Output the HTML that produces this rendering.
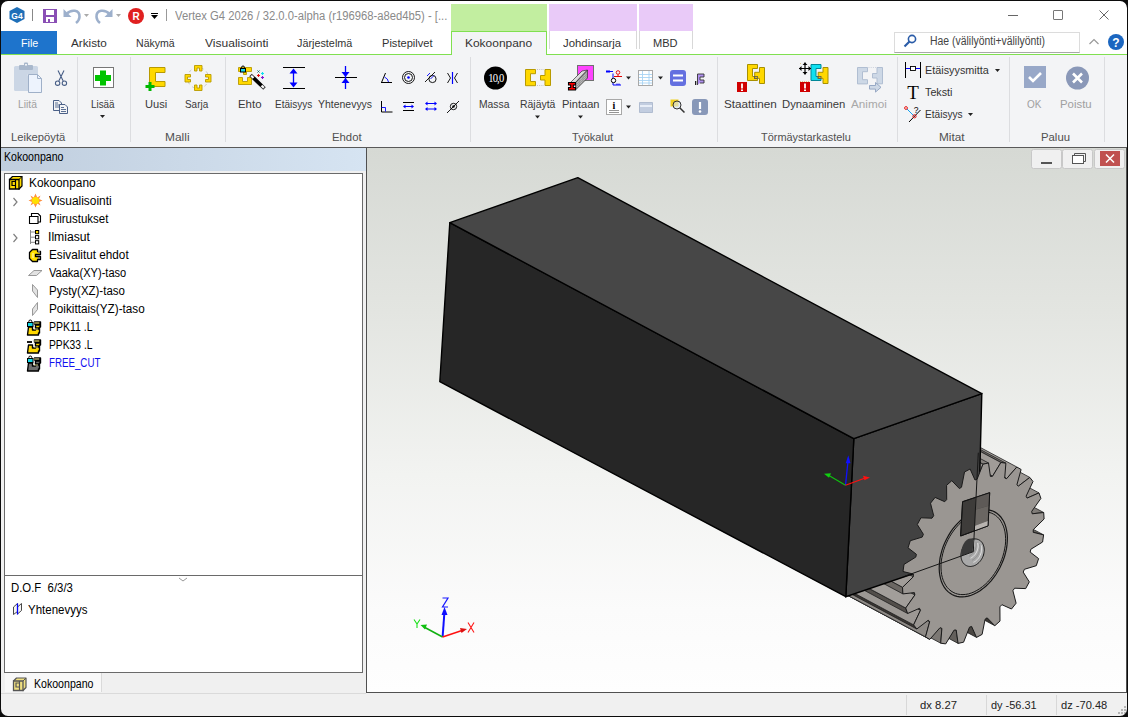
<!DOCTYPE html>
<html><head><meta charset="utf-8">
<style>
*{margin:0;padding:0;box-sizing:border-box}
html,body{width:1128px;height:717px;overflow:hidden;background:#0c0c0c}
body{font-family:"Liberation Sans",sans-serif;font-size:12px;position:relative}
#win{position:absolute;left:0;top:0;width:1128px;height:717px;border-radius:8px;overflow:hidden;background:#f0f0f0}
.a{position:absolute}
.t{position:absolute;white-space:nowrap;line-height:14px;font-size:12px}
svg{position:absolute;left:0;top:0}
#bd{position:absolute;left:-1px;top:-1px;width:1130px;height:719px;border:2px solid #0c0c0c;border-radius:9px}
</style></head><body>
<div id="win">
<div class="a" style="left:0px;top:0px;width:1128px;height:31px;background:#fff"></div>
<div class="a" style="left:32px;top:9px;width:1px;height:12px;background:#888"></div>
<div class="a" style="left:166px;top:9px;width:1px;height:12px;background:#999"></div>
<div class="a" style="left:451px;top:4px;width:96px;height:27px;background:#c2eea0"></div>
<div class="a" style="left:549px;top:4px;width:88px;height:27px;background:#e9caf8"></div>
<div class="a" style="left:639px;top:4px;width:54px;height:27px;background:#e9caf8"></div>
<div class="a" style="left:1008px;top:15px;width:10px;height:1px;background:#666"></div>
<div class="a" style="left:1053px;top:10px;width:10px;height:10px;border:1px solid #777;border-radius:1px"></div>
<div class="a" style="left:0px;top:31px;width:1128px;height:23px;background:#fff"></div>
<div class="a" style="left:0px;top:31px;width:57px;height:23px;background:#1e74cc"></div>
<div class="a" style="left:0px;top:54px;width:451px;height:1px;background:#80e050"></div>
<div class="a" style="left:547px;top:54px;width:581px;height:1px;background:#80e050"></div>
<div class="a" style="left:451px;top:31px;width:96px;height:24px;background:#f3f4f6;border:1px solid #80e050;border-bottom:none"></div>
<div class="a" style="left:549px;top:31px;width:1px;height:18px;background:#d8d8d8"></div>
<div class="a" style="left:636px;top:31px;width:1px;height:18px;background:#d8d8d8"></div>
<div class="a" style="left:639px;top:31px;width:1px;height:18px;background:#d8d8d8"></div>
<div class="a" style="left:692px;top:31px;width:1px;height:18px;background:#d8d8d8"></div>
<div class="a" style="left:894px;top:32px;width:186px;height:21px;background:#fff;border:1px solid #dcdcdc;border-bottom-color:#a8a8a8"></div>
<div class="a" style="left:0px;top:55px;width:1128px;height:92px;background:#f3f4f6"></div>
<div class="a" style="left:0px;top:147px;width:1128px;height:1px;background:#595959"></div>
<div class="a" style="left:77px;top:57px;width:1px;height:85px;background:#dcdde0"></div>
<div class="a" style="left:130px;top:57px;width:1px;height:85px;background:#dcdde0"></div>
<div class="a" style="left:225px;top:57px;width:1px;height:85px;background:#dcdde0"></div>
<div class="a" style="left:470px;top:57px;width:1px;height:85px;background:#dcdde0"></div>
<div class="a" style="left:717px;top:57px;width:1px;height:85px;background:#dcdde0"></div>
<div class="a" style="left:897px;top:57px;width:1px;height:85px;background:#dcdde0"></div>
<div class="a" style="left:1009px;top:57px;width:1px;height:85px;background:#dcdde0"></div>
<div class="a" style="left:1104px;top:57px;width:1px;height:85px;background:#dcdde0"></div>
<div class="a" style="left:0px;top:148px;width:366px;height:545px;background:#f0f0f0"></div>
<div class="a" style="left:0px;top:148px;width:366px;height:23px;background:linear-gradient(90deg,#c0cede,#d6e4f2)"></div>
<div class="a" style="left:4px;top:173px;width:359px;height:500px;background:#fff;border:1px solid #6a6a6a"></div>
<div class="a" style="left:5px;top:575px;width:357px;height:1px;background:#6a6a6a"></div>
<div class="a" style="left:5px;top:673px;width:97px;height:19px;background:#f8f8f8;border-right:1px solid #dadada"></div>
<div class="a" style="left:366px;top:148px;width:1px;height:545px;background:#505050"></div>
<div class="a" style="left:367px;top:148px;width:760px;height:544px;background:linear-gradient(180deg,#d6d9d4 0%,#e3e5e1 30%,#f2f3f1 60%,#fbfbfb 85%,#fefefe 100%)"></div>
<div class="a" style="left:367px;top:692px;width:760px;height:1px;background:#505050"></div>
<div class="a" style="left:1126px;top:148px;width:1px;height:545px;background:#505050"></div>
<div class="a" style="left:0px;top:693px;width:1128px;height:24px;background:#f0f0f0"></div>
<div class="a" style="left:0px;top:693px;width:366px;height:1px;background:#dadada"></div>
<div class="a" style="left:906px;top:695px;width:1px;height:20px;background:#d8d8d8"></div>
<div class="a" style="left:986px;top:695px;width:1px;height:20px;background:#d8d8d8"></div>
<div class="a" style="left:1056px;top:695px;width:1px;height:20px;background:#d8d8d8"></div>
<div class="a" style="left:1117.5px;top:711.5px;width:2px;height:2px;background:#b4b4b4"></div>
<div class="a" style="left:1120.5px;top:711.5px;width:2px;height:2px;background:#b4b4b4"></div>
<div class="a" style="left:1123.5px;top:711.5px;width:2px;height:2px;background:#b4b4b4"></div>
<div class="a" style="left:1120.5px;top:708.5px;width:2px;height:2px;background:#b4b4b4"></div>
<div class="a" style="left:1123.5px;top:708.5px;width:2px;height:2px;background:#b4b4b4"></div>
<div class="a" style="left:1123.5px;top:705.5px;width:2px;height:2px;background:#b4b4b4"></div>
<div class="t" style="left:175.00px;top:8.84px;color:#8a8a8a;font-size:12px;transform:scaleX(0.9384);transform-origin:0 0;">Vertex G4 2026 / 32.0.0-alpha (r196968-a8ed4b5) - [...</div>
<div class="t" style="left:20.70px;top:36.08px;color:#fff;font-size:11.3px;transform:scaleX(0.9486);transform-origin:0 0;">File</div>
<div class="t" style="left:71.00px;top:36.08px;color:#333;font-size:11.3px;transform:scaleX(1.0367);transform-origin:0 0;">Arkisto</div>
<div class="t" style="left:136.20px;top:36.08px;color:#333;font-size:11.3px;transform:scaleX(0.9348);transform-origin:0 0;">N&auml;kym&auml;</div>
<div class="t" style="left:205.00px;top:36.08px;color:#333;font-size:11.3px;transform:scaleX(1.0672);transform-origin:0 0;">Visualisointi</div>
<div class="t" style="left:297.10px;top:36.08px;color:#333;font-size:11.3px;transform:scaleX(0.9577);transform-origin:0 0;">J&auml;rjestelm&auml;</div>
<div class="t" style="left:382.40px;top:36.08px;color:#333;font-size:11.3px;transform:scaleX(0.9819);transform-origin:0 0;">Pistepilvet</div>
<div class="t" style="left:465.00px;top:36.08px;color:#333;font-size:11.3px;transform:scaleX(1.0576);transform-origin:0 0;">Kokoonpano</div>
<div class="t" style="left:562.90px;top:36.08px;color:#333;font-size:11.3px;transform:scaleX(1.0053);transform-origin:0 0;">Johdinsarja</div>
<div class="t" style="left:653.20px;top:36.08px;color:#333;font-size:11.3px;transform:scaleX(0.9781);transform-origin:0 0;">MBD</div>
<div class="t" style="left:929.50px;top:34.04px;color:#444;font-size:12px;transform:scaleX(0.8686);transform-origin:0 0;">Hae (v&auml;lily&ouml;nti+v&auml;lily&ouml;nti)</div>
<div class="t" style="left:11.00px;top:130.08px;color:#505050;font-size:11.3px;transform:scaleX(0.9935);transform-origin:0 0;">Leikep&ouml;yt&auml;</div>
<div class="t" style="left:164.90px;top:130.08px;color:#505050;font-size:11.3px;transform:scaleX(1.0567);transform-origin:0 0;">Malli</div>
<div class="t" style="left:331.50px;top:130.08px;color:#505050;font-size:11.3px;transform:scaleX(1.0038);transform-origin:0 0;">Ehdot</div>
<div class="t" style="left:572.00px;top:130.08px;color:#505050;font-size:11.3px;transform:scaleX(0.9783);transform-origin:0 0;">Ty&ouml;kalut</div>
<div class="t" style="left:761.40px;top:130.08px;color:#505050;font-size:11.3px;transform:scaleX(0.9673);transform-origin:0 0;">T&ouml;rm&auml;ystarkastelu</div>
<div class="t" style="left:939.40px;top:130.08px;color:#505050;font-size:11.3px;transform:scaleX(1.0457);transform-origin:0 0;">Mitat</div>
<div class="t" style="left:1041.30px;top:130.08px;color:#505050;font-size:11.3px;transform:scaleX(1.0031);transform-origin:0 0;">Paluu</div>
<div class="t" style="left:17.60px;top:97.08px;color:#a0a0a0;font-size:11.3px;transform:scaleX(0.9141);transform-origin:0 0;">Liit&auml;</div>
<div class="t" style="left:90.60px;top:97.08px;color:#3a3a3a;font-size:11.3px;transform:scaleX(0.8729);transform-origin:0 0;">Lis&auml;&auml;</div>
<div class="t" style="left:144.60px;top:97.08px;color:#3a3a3a;font-size:11.3px;transform:scaleX(0.9824);transform-origin:0 0;">Uusi</div>
<div class="t" style="left:185.20px;top:97.08px;color:#3a3a3a;font-size:11.3px;transform:scaleX(0.8786);transform-origin:0 0;">Sarja</div>
<div class="t" style="left:238.40px;top:97.08px;color:#3a3a3a;font-size:11.3px;transform:scaleX(1.0106);transform-origin:0 0;">Ehto</div>
<div class="t" style="left:274.70px;top:97.08px;color:#3a3a3a;font-size:11.3px;transform:scaleX(0.8866);transform-origin:0 0;">Et&auml;isyys</div>
<div class="t" style="left:318.10px;top:97.08px;color:#3a3a3a;font-size:11.3px;transform:scaleX(0.9260);transform-origin:0 0;">Yhtenevyys</div>
<div class="t" style="left:479.30px;top:97.08px;color:#3a3a3a;font-size:11.3px;transform:scaleX(0.9150);transform-origin:0 0;">Massa</div>
<div class="t" style="left:519.60px;top:97.08px;color:#3a3a3a;font-size:11.3px;transform:scaleX(0.9226);transform-origin:0 0;">R&auml;j&auml;yt&auml;</div>
<div class="t" style="left:561.80px;top:97.08px;color:#3a3a3a;font-size:11.3px;transform:scaleX(0.9781);transform-origin:0 0;">Pintaan</div>
<div class="t" style="left:724.00px;top:97.08px;color:#3a3a3a;font-size:11.3px;transform:scaleX(1.0377);transform-origin:0 0;">Staattinen</div>
<div class="t" style="left:782.20px;top:97.08px;color:#3a3a3a;font-size:11.3px;transform:scaleX(0.9994);transform-origin:0 0;">Dynaaminen</div>
<div class="t" style="left:851.00px;top:97.08px;color:#a8a8a8;font-size:11.3px;transform:scaleX(1.0376);transform-origin:0 0;">Animoi</div>
<div class="t" style="left:1027.20px;top:97.08px;color:#a0a0a0;font-size:11.3px;transform:scaleX(0.8816);transform-origin:0 0;">OK</div>
<div class="t" style="left:1060.30px;top:97.08px;color:#a0a0a0;font-size:11.3px;transform:scaleX(1.0092);transform-origin:0 0;">Poistu</div>
<div class="t" style="left:924.50px;top:63.08px;color:#333;font-size:11.3px;transform:scaleX(0.9590);transform-origin:0 0;">Et&auml;isyysmitta</div>
<div class="t" style="left:924.50px;top:85.08px;color:#333;font-size:11.3px;transform:scaleX(0.9518);transform-origin:0 0;">Teksti</div>
<div class="t" style="left:924.50px;top:106.58px;color:#333;font-size:11.3px;transform:scaleX(0.8960);transform-origin:0 0;">Et&auml;isyys</div>
<div class="t" style="left:4.30px;top:149.84px;color:#000;font-size:12px;transform:scaleX(0.8816);transform-origin:0 0;">Kokoonpano</div>
<div class="t" style="left:29.30px;top:175.64px;color:#000;font-size:12px;transform:scaleX(0.9879);transform-origin:0 0;">Kokoonpano</div>
<div class="t" style="left:48.70px;top:193.64px;color:#000;font-size:12px;transform:scaleX(0.9923);transform-origin:0 0;">Visualisointi</div>
<div class="t" style="left:48.70px;top:211.64px;color:#000;font-size:12px;transform:scaleX(0.9587);transform-origin:0 0;">Piirustukset</div>
<div class="t" style="left:47.69px;top:229.64px;color:#000;font-size:12px;transform:scaleX(1.0144);transform-origin:0 0;">Ilmiasut</div>
<div class="t" style="left:48.70px;top:247.64px;color:#000;font-size:12px;transform:scaleX(0.9787);transform-origin:0 0;">Esivalitut ehdot</div>
<div class="t" style="left:48.70px;top:265.64px;color:#000;font-size:12px;transform:scaleX(0.9211);transform-origin:0 0;">Vaaka(XY)-taso</div>
<div class="t" style="left:48.70px;top:283.64px;color:#000;font-size:12px;transform:scaleX(0.9565);transform-origin:0 0;">Pysty(XZ)-taso</div>
<div class="t" style="left:48.70px;top:301.64px;color:#000;font-size:12px;transform:scaleX(0.9761);transform-origin:0 0;">Poikittais(YZ)-taso</div>
<div class="t" style="left:48.70px;top:319.64px;color:#000;font-size:12px;transform:scaleX(0.8736);transform-origin:0 0;">PPK11 .L</div>
<div class="t" style="left:48.70px;top:337.64px;color:#000;font-size:12px;transform:scaleX(0.8584);transform-origin:0 0;">PPK33 .L</div>
<div class="t" style="left:48.70px;top:355.64px;color:#1010f0;font-size:12px;transform:scaleX(0.8108);transform-origin:0 0;">FREE_CUT</div>
<div class="t" style="left:11.40px;top:580.54px;color:#000;font-size:12px;transform:scaleX(0.9470);transform-origin:0 0;">D.O.F&nbsp; 6/3/3</div>
<div class="t" style="left:27.60px;top:602.64px;color:#000;font-size:12px;transform:scaleX(0.9576);transform-origin:0 0;">Yhtenevyys</div>
<div class="t" style="left:34.30px;top:677.04px;color:#000;font-size:12px;transform:scaleX(0.8816);transform-origin:0 0;">Kokoonpano</div>
<div class="t" style="left:920.30px;top:698.08px;color:#222;font-size:11.3px;transform:scaleX(0.9980);transform-origin:0 0;">dx 8.27</div>
<div class="t" style="left:991.00px;top:698.08px;color:#222;font-size:11.3px;transform:scaleX(0.9676);transform-origin:0 0;">dy -56.31</div>
<div class="t" style="left:1061.00px;top:698.08px;color:#222;font-size:11.3px;transform:scaleX(0.9825);transform-origin:0 0;">dz -70.48</div>
<svg width="1128" height="717" viewBox="0 0 1128 717">
<polygon points="17,7 24.5,11 24.5,19 17,23 9.5,19 9.5,11" fill="#1e6fb8"/>
<text x="17" y="18.5" font-size="8.5" font-weight="bold" fill="#fff" text-anchor="middle" font-family="Liberation Sans">G4</text>
<rect x="43.5" y="9.5" width="13" height="13" fill="#8a4fb5" stroke="#8a4fb5"/>
<rect x="46" y="10" width="8" height="5" fill="#fff"/>
<rect x="46" y="17" width="8" height="5" fill="#fff"/><rect x="48" y="19" width="2" height="3" fill="#8a4fb5"/>
<path d="M63.5,9 L63.5,17 L71.5,17 Z" fill="#9db0cc"/><path d="M66.5,14 C71,9 80,9.5 79.5,17 C79.3,19.5 78,21.5 76,23" fill="none" stroke="#9db0cc" stroke-width="2.6"/>
<path d="M84,14 L89,14 L86.5,17 Z" fill="#aaa"/>
<path d="M112.5,9 L112.5,17 L104.5,17 Z" fill="#9db0cc"/><path d="M109.5,14 C105,9 96,9.5 96.5,17 C96.7,19.5 98,21.5 100,23" fill="none" stroke="#9db0cc" stroke-width="2.6"/>
<path d="M116,14 L121,14 L118.5,17 Z" fill="#aaa"/>
<circle cx="136" cy="16" r="8" fill="#e02020"/>
<text x="136" y="20" font-size="10" font-weight="bold" fill="#fff" text-anchor="middle" font-family="Liberation Sans">R</text>
<rect x="151" y="13" width="7" height="1" fill="#000"/><path d="M151,15 L158,15 L154.5,19 Z" fill="#000"/>
<path d="M1099.5,10.5 L1108.5,19.5 M1108.5,10.5 L1099.5,19.5" stroke="#666" stroke-width="1"/>
<circle cx="912" cy="39" r="3.6" fill="none" stroke="#2a5ca8" stroke-width="1.6"/><path d="M909.5,41.5 L904.5,46.5" stroke="#2a5ca8" stroke-width="2.2"/>
<path d="M1089.5,44 L1094,39.5 L1098.5,44" fill="none" stroke="#999" stroke-width="1.2"/>
<circle cx="1116" cy="42" r="8" fill="#1b66c0"/>
<text x="1116" y="46.5" font-size="12" font-weight="bold" fill="#fff" text-anchor="middle" font-family="Liberation Sans">?</text>
<path d="M100.0,115 L105.0,115 L102.5,118 Z" fill="#222"/>
<path d="M535.0,115.5 L540.0,115.5 L537.5,118.5 Z" fill="#222"/>
<path d="M578.0,115.5 L583.0,115.5 L580.5,118.5 Z" fill="#222"/>
<path d="M995.0,69 L1000.0,69 L997.5,72 Z" fill="#222"/>
<path d="M968.0,113 L973.0,113 L970.5,116 Z" fill="#222"/>
<path d="M179,578 L183,581 L187,578" fill="none" stroke="#999" stroke-width="1"/>
<rect x="14" y="66" width="24" height="25" rx="1.5" fill="#cbd6e5"/>
<rect x="19" y="65" width="14" height="5" rx="1" fill="#a9b8cc"/><rect x="24" y="62.5" width="4" height="4" rx="1" fill="#a9b8cc"/><rect x="25.2" y="64" width="1.6" height="1.6" fill="#fff"/>
<rect x="27.5" y="74.5" width="11" height="1" fill="#f3f4f6"/>
<path d="M28.5,74.5 L37.5,74.5 L41.5,78.5 L41.5,92.5 L28.5,92.5 Z" fill="#edf3fd" stroke="#9fb0c8" stroke-width="1"/><path d="M37.5,74.5 L37.5,78.5 L41.5,78.5" fill="none" stroke="#9fb0c8"/>
<path d="M58,70.5 L63.2,81 M64,70.5 L58.8,81" stroke="#4a6088" stroke-width="1.1" fill="none"/><circle cx="57.6" cy="83.2" r="2.2" fill="none" stroke="#4a6088" stroke-width="1.1"/><circle cx="64.4" cy="83.2" r="2.2" fill="none" stroke="#4a6088" stroke-width="1.1"/>
<path d="M53.5,100.5 L59,100.5 L61.5,103 L61.5,110.5 L53.5,110.5 Z" fill="#f3f4f6" stroke="#4a6088"/><path d="M55,103 h3 M55,105 h5 M55,107 h4" stroke="#4a6088" stroke-width="0.9"/>
<path d="M59.5,104.5 L65,104.5 L67.5,107 L67.5,113.5 L59.5,113.5 Z" fill="#f3f4f6" stroke="#4a6088"/><path d="M61,107.5 h3 M61,109.5 h5 M61,111.5 h5" stroke="#4a6088" stroke-width="0.9"/>
<rect x="93.5" y="67.5" width="20" height="20" fill="#fff" stroke="#777"/>
<path d="M100,70.5 h6 v4.5 h5 v6 h-5 v4.5 h-6 v-4.5 h-5 v-6 h5 Z" fill="#00c400"/>
<path d="M149.5,67.5 h15.5 v5 h-9.5 v9 h9.5 v5 h-15.5 Z" fill="#ffd800" stroke="#b89a00"/>
<path d="M148.5,82 h3 v3 h3 v3 h-3 v3 h-3 v-3 h-3 v-3 h3 Z" fill="#00b800"/>
<circle cx="198" cy="78" r="10.5" fill="none" stroke="#c0c0c0" stroke-width="0.9" stroke-dasharray="3,3.5"/>
<path d="M194.5,71 v-5.5 h7.5 v5.5 h-2.5 v-3 h-2.5 v3 Z" fill="#ffd800" stroke="#b89a00" stroke-width="0.9"/>
<path d="M194.5,85 v5.5 h7.5 v-5.5 h-2.5 v3 h-2.5 v-3 Z" fill="#ffd800" stroke="#b89a00" stroke-width="0.9"/>
<path d="M190.5,74.5 h-5.5 v7.5 h5.5 v-2.5 h-3 v-2.5 h3 Z" fill="#ffd800" stroke="#b89a00" stroke-width="0.9"/>
<path d="M205.5,74.5 h5.5 v7.5 h-5.5 v-2.5 h3 v-2.5 h-3 Z" fill="#ffd800" stroke="#b89a00" stroke-width="0.9"/>
<path d="M238.5,67.5 h13 v4 h-13 Z M243.5,71.5 h3 v3 h-3 Z" fill="#ffd800" stroke="#b89a00" stroke-width="0.9"/>
<path d="M238.5,77.5 h4 v4 h5 v-4 h4 v7 h-13 Z" fill="#ffd800" stroke="#b89a00" stroke-width="0.9"/>
<rect x="240.5" y="68.5" width="5" height="3.5" fill="#18d8e8" stroke="#000" stroke-width="1"/><path d="M241.5,68.5 v-1 a1.5,1.5 0 0 1 3,0 v1" fill="none" stroke="#000" stroke-width="1"/>
<path d="M250.5,75 L264.5,88.5" stroke="#333" stroke-width="3.6"/><path d="M251.2,75.7 L263.8,87.8" stroke="#fff" stroke-width="2"/><path d="M253.5,78 L261.5,85.7" stroke="#000" stroke-width="3.2"/>
<path d="M257.5,70.5 l2,2 m0,-2 l-2,2" stroke="#107070" stroke-width="1"/><path d="M261,73.5 h3 m-1.5,-1.5 v3" stroke="#10e0f0" stroke-width="1.1"/><path d="M257,75.5 h3 m-1.5,-1.5 v3" stroke="#e01010" stroke-width="1.1"/><path d="M261,77.5 h3 m-1.5,-1.5 v3" stroke="#8010d0" stroke-width="1.1"/>
<path d="M283,67.5 h22 M283,88.5 h22" stroke="#000" stroke-width="1"/>
<path d="M293.5,71 v14" stroke="#0000ff" stroke-width="1.3"/><path d="M289.5,73.5 L293.5,68.5 L297.5,73.5 Z M289.5,82.5 L293.5,87.5 L297.5,82.5 Z" fill="#0000ff"/>
<path d="M335,77.5 h22" stroke="#000" stroke-width="1"/>
<path d="M345.5,66 v23" stroke="#0000ff" stroke-width="1.3"/><path d="M341.5,72 L345.5,77 L349.5,72 Z M341.5,83 L345.5,78 L349.5,83 Z" fill="#0000ff"/>
<path d="M381,82.5 h11 M381.5,82.5 L385.5,73" stroke="#000" stroke-width="1" fill="none"/><path d="M384.5,77 Q388,78.5 388.5,82" stroke="#0000ff" stroke-width="0.9" fill="none"/>
<circle cx="408.5" cy="77.5" r="6" fill="none" stroke="#000" stroke-width="0.9"/><circle cx="408.5" cy="77.5" r="4" fill="none" stroke="#000" stroke-width="0.9"/><circle cx="408.5" cy="77.5" r="1.3" fill="#0000ff"/>
<path d="M425,82 L435,72" stroke="#000" stroke-width="0.9"/><circle cx="432.5" cy="79" r="3.6" fill="none" stroke="#000" stroke-width="0.9"/><path d="M427,76 L430,73 M430.5,79 L434,75.5" stroke="#0000ff" stroke-width="0.9"/>
<path d="M452.5,72 v12" stroke="#0000ff" stroke-width="1.2"/><path d="M447.5,73 L450.5,78 L447.5,83 M457.5,73 L454.5,78 L457.5,83" stroke="#000" stroke-width="0.9" fill="none"/>
<path d="M381.5,101 v11 h11" stroke="#000" stroke-width="1" fill="none"/><path d="M381.5,107.5 h4 v4" stroke="#0000ff" stroke-width="0.9" fill="none"/>
<path d="M403,102.5 h11 M403,110.5 h11" stroke="#000" stroke-width="1"/><path d="M404.5,106.5 h8" stroke="#0000ff" stroke-width="1"/><path d="M403,106.5 l2.5,-2 v4 Z M414,106.5 l-2.5,-2 v4 Z" fill="#0000ff"/>
<path d="M426.5,103.5 h9 M426.5,109 h9" stroke="#0000ff" stroke-width="1"/><path d="M425,103.5 l2.5,-2 v4 Z M437,103.5 l-2.5,-2 v4 Z M425,109 l2.5,-2 v4 Z M437,109 l-2.5,-2 v4 Z" fill="#0000ff"/>
<path d="M447,113 L459,101" stroke="#000" stroke-width="0.9"/><circle cx="453.5" cy="106.5" r="3.2" fill="none" stroke="#000" stroke-width="0.9"/><circle cx="453.5" cy="106.5" r="1.2" fill="#000"/>
<circle cx="495.5" cy="78" r="11.5" fill="#000"/>
<text x="495.8" y="82.3" font-size="11.5" fill="#fff" text-anchor="middle" font-family="Liberation Serif" letter-spacing="-0.9" transform="translate(495.8,0) scale(0.92,1) translate(-495.8,0)">10,0</text>
<path d="M525.5,69.5 h10 v4.2 h-5 v7.8 h5 v4.2 h-10 Z" fill="#ffd800" stroke="#b89a00"/>
<path d="M550.5,69.5 h-5.5 v6 h-4.5 v4.5 h4.5 v5.5 h5.5 Z" fill="#ffd800" stroke="#b89a00"/>
<path d="M537,69.5 h7 M537,85.5 h7" stroke="#b8b8b8" stroke-width="0.8" stroke-dasharray="1,1.2"/>
<rect x="577.5" y="65.5" width="16" height="15" fill="#ff44ff" stroke="#707070"/>
<path d="M569,84 L582,71 L587.5,70 L575,83 Z" fill="#dcdcdc" stroke="#333" stroke-width="0.7"/>
<path d="M575,83 L587.5,70 L587.5,78 L576,89.5 Z" fill="#9a9a9a" stroke="#333" stroke-width="0.7"/>
<path d="M577,87 L587,77 M577,85 L587,75 M577,83 L587,73" stroke="#e8e8e8" stroke-width="0.6" stroke-dasharray="1,1"/>
<path d="M568.5,82.5 h7 v2.5 h-2.2 v2.5 h2.2 v2.5 h-7 v-2.5 h2.2 v-2.5 h-2.2 Z" fill="#ff0000" stroke="#000" stroke-width="1.1"/>
<path d="M613,73.5 v11.5 h8" stroke="#0000ff" stroke-width="1" fill="none"/><path d="M606,71.5 h7 M607,70 v3 M609,70 v3 M617,85 v-1.5 M619,85 v-1.5" stroke="#0000ff" stroke-width="1" fill="none"/>
<path d="M614,76.5 h8 M618,76.5 v-2" stroke="#e00000" stroke-width="1"/><circle cx="618" cy="72.5" r="1.8" fill="none" stroke="#e00000" stroke-width="0.9"/>
<circle cx="613.5" cy="80.5" r="2.2" fill="#fff" stroke="#000" stroke-width="1"/>
<path d="M626.0,76.5 L631.0,76.5 L628.5,79.5 Z" fill="#222"/>
<rect x="638.5" y="70.5" width="14" height="15" fill="#fff" stroke="#a8a8a8"/><path d="M639,74.5 h13 M639,77.5 h13 M639,80.5 h13 M639,83 h13 M642.5,71 v14 M649,71 v14" stroke="#a8d4f4" stroke-width="0.9"/>
<path d="M658.0,76.5 L663.0,76.5 L660.5,79.5 Z" fill="#222"/>
<rect x="670" y="70" width="16" height="16" rx="3" fill="#6470e0"/><path d="M673,75.5 h10 M673,80.5 h10" stroke="#fff" stroke-width="1.8"/>
<path d="M697.5,85 v-11 h6.5 v3 h-4 v3 h4 v3 h-4" fill="#b090f0" stroke="#333" stroke-width="0.9"/><rect x="695" y="81" width="1.3" height="4" fill="#222"/>
<rect x="606.5" y="99.5" width="15" height="15" fill="#fff" stroke="#a8a8a8"/><text x="614" y="108.5" font-size="10" font-weight="bold" fill="#000" text-anchor="middle" font-family="Liberation Serif">i</text><path d="M609,110.5 h10 M609,112.5 h10" stroke="#666" stroke-width="0.7"/>
<path d="M626.0,105.5 L631.0,105.5 L628.5,108.5 Z" fill="#222"/>
<path d="M639.5,102.5 h13 v10 h-13 Z" fill="#c2cde0" stroke="#b0bcd0"/><path d="M640,106 h12" stroke="#e8eef8" stroke-width="2"/>
<rect x="670.5" y="99.5" width="8" height="7" fill="#f0d020"/><circle cx="677" cy="105" r="4" fill="#d8e8f8" fill-opacity="0.6" stroke="#333" stroke-width="1"/><path d="M680,108 L684.5,112.5" stroke="#333" stroke-width="1.5"/>
<rect x="692" y="99" width="16" height="16" rx="3" fill="#8898b8"/><path d="M700,102 v7" stroke="#fff" stroke-width="2.2"/><circle cx="700" cy="111.5" r="1.3" fill="#fff"/>
<path d="M747.5,64.5 h10 v4 h-5 v8 h5 v4 h-10 Z" fill="#ffd800" stroke="#a89000" stroke-width="1"/>
<path d="M764.5,67.5 v16 h-5 v-5.2 h-4.8 v-6 h4.8 v-4.8 Z" fill="#ffd800" stroke="#a89000" stroke-width="1"/>
<rect x="754.5" y="76.5" width="3" height="2" fill="none" stroke="#555" stroke-width="0.8"/>
<rect x="737" y="82" width="10" height="10" fill="#d00000"/><path d="M742,83.5 v5" stroke="#fff" stroke-width="1.8"/><rect x="741" y="89.5" width="2" height="1.5" fill="#fff"/>
<path d="M811.0,64.5 h10 v4 h-5 v8 h5 v4 h-10 Z" fill="#10e0f0" stroke="#008898" stroke-width="1"/>
<path d="M828.0,67.5 v16 h-5 v-5.2 h-4.8 v-6 h4.8 v-4.8 Z" fill="#ffd800" stroke="#a89000" stroke-width="1"/>
<rect x="818.0" y="76.5" width="3" height="2" fill="none" stroke="#555" stroke-width="0.8"/>
<path d="M799,68.5 h12 M805,62.5 v12" stroke="#000" stroke-width="1.2"/><path d="M799,68.5 l2.5,-2.5 v5 Z M811,68.5 l-2.5,-2.5 v5 Z M805,62.5 l-2.5,2.5 h5 Z M805,74.5 l-2.5,-2.5 h5 Z" fill="#000"/>
<path d="M800,63.5 h2 M800,81.5 h9" stroke="#d8b860" stroke-width="0.7" stroke-dasharray="1,1"/>
<rect x="800" y="82" width="10" height="10" fill="#d00000"/><path d="M805,83.5 v5" stroke="#fff" stroke-width="1.8"/><rect x="804" y="89.5" width="2" height="1.5" fill="#fff"/>
<path d="M857.5,67.5 h10 v4.2 h-5 v8 h5 v4.2 h-10 Z" fill="#cdd8e6" stroke="#b0bed2"/>
<path d="M882.5,67.5 h-5.5 v6 h-4.5 v4.5 h4.5 v5.8 h5.5 Z" fill="#cdd8e6" stroke="#b0bed2"/>
<path d="M868.5,67.5 h8" stroke="#c0c8d4" stroke-width="0.8" stroke-dasharray="1,1.2"/>
<path d="M869.5,85.5 h6 v-3 l5.5,4.8 l-5.5,4.8 v-3 h-6 Z" fill="#cdd8e6" stroke="#8fa2c0" stroke-width="0.9"/>
<path d="M905.5,62 v16 M920.5,62 v16" stroke="#000" stroke-width="1"/><path d="M906,68.5 h14" stroke="#0000ff" stroke-width="1"/><rect x="910.5" y="66.5" width="5" height="4" fill="#fff" stroke="#000" stroke-width="0.9"/>
<text x="913" y="98.5" font-size="19" fill="#000" text-anchor="middle" font-family="Liberation Serif">T</text>
<path d="M909,122 L920.5,110" stroke="#000" stroke-width="1"/><path d="M906.5,108.5 L913.8,115.8" stroke="#10a0f0" stroke-width="1"/><circle cx="906" cy="108" r="1.4" fill="#fff" stroke="#e00000" stroke-width="0.9"/><circle cx="914.5" cy="116.3" r="1.6" fill="none" stroke="#e00000" stroke-width="0.9"/>
<text x="916" y="112.5" font-size="8.5" fill="#000" text-anchor="middle" font-family="Liberation Sans">?</text>
<rect x="1024" y="66" width="22" height="22" fill="#98a8c8"/><path d="M1029,77 l4,4 l8,-8" stroke="#fff" stroke-width="2.6" fill="none"/>
<circle cx="1077.5" cy="78" r="11.5" fill="#8a98b8"/><path d="M1073,73.5 l9,9 m0,-9 l-9,9" stroke="#fff" stroke-width="2.6"/>
<path d="M9.5,179.5 L12.5,176.5 L22,176.5 L22,186 L19,189 Z" fill="#ffdc00" stroke="#000" stroke-width="1.2" stroke-linejoin="round"/>
<path d="M9.5,179.5 h9.5 v9.5 h-9.5 Z" fill="#ffdc00" stroke="#000" stroke-width="1.3"/><path d="M19,179.5 L22,176.5" stroke="#000" stroke-width="1"/>
<path d="M15.5,181.5 h-3.5 v4 h3.5 M15.5,179.5 v9.5" stroke="#000" stroke-width="1.2" fill="none"/>
<path d="M13.5,198 L17,202 L13.5,206" fill="none" stroke="#808080" stroke-width="1.2"/>
<path d="M13.5,234 L17,238 L13.5,242" fill="none" stroke="#808080" stroke-width="1.2"/>
<g transform="translate(35.5,200.5)"><path d="M0,-7 L1.8,-3 L5,-5 L3.5,-1.5 L7,0 L3.5,1.5 L5,5 L1.8,3 L0,7 L-1.8,3 L-5,5 L-3.5,1.5 L-7,0 L-3.5,-1.5 L-5,-5 L-1.8,-3 Z" fill="#ff9040"/><circle r="3.6" fill="#ffe000"/></g>
<path d="M31.5,213.5 h6.5 l2.5,2.5 v6 h-9 Z" fill="#fff" stroke="#000" stroke-width="1.1"/>
<path d="M29.5,216.5 h8.5 v7 h-8.5 Z" fill="#fff" stroke="#000" stroke-width="1.1"/>
<path d="M30.5,230 v14 M30.5,232 h4.5 M30.5,237.2 h4.5 M30.5,242.3 h4.5" stroke="#8a8a8a" stroke-width="1" fill="none"/>
<rect x="35.5" y="230.5" width="3.2" height="3.2" fill="#ffd800" stroke="#000" stroke-width="1"/><rect x="35.5" y="235.6" width="3.2" height="3.2" fill="#fff" stroke="#000" stroke-width="1"/><rect x="35.5" y="240.7" width="3.2" height="3.2" fill="#fff" stroke="#000" stroke-width="1"/>
<path d="M32.5,249.5 h5 v2 h3 v3 h-5 v2 h5 v3 h-3 v2 h-5 l-3,-3 v-6 Z" fill="#ffe000" stroke="#000" stroke-width="1.3" stroke-linejoin="round"/>
<rect x="38" y="251" width="2" height="2" fill="#777"/><rect x="38" y="257" width="2" height="2" fill="#777"/><path d="M33,253 v5" stroke="#fff" stroke-width="0.8"/>
<path d="M28.5,275.5 L34,270.5 L42,270.5 L36.5,275.5 Z" fill="#e2e2e2" stroke="#8e8e8e" stroke-width="0.9"/>
<path d="M32.5,284.5 L37.5,290 L37.5,297.5 L32.5,291 Z" fill="#e2e2e2" stroke="#8e8e8e" stroke-width="0.9"/>
<path d="M32.5,309 L37.5,302.5 L37.5,309.5 L32.5,315.5 Z" fill="#e2e2e2" stroke="#8e8e8e" stroke-width="0.9"/>
<path d="M28.5,327.0 h4 v3 h3 v-1 h3 v-1 h-3 v-3 h4 v-1 h-5 v-2 h6 v5 h-1 v6 h-1 v2 h-11 Z" fill="#ffd800" stroke="#000" stroke-width="1.4" stroke-linejoin="round"/>
<path d="M34,323.0 h5 M34,329.0 h4" stroke="#fff8a0" stroke-width="0.8"/>
<rect x="27.5" y="322.5" width="5.5" height="4" fill="#10d8e8" stroke="#000" stroke-width="1"/><path d="M28.8,322.5 v-1 a1.5,1.5 0 0 1 3,0 v1" fill="none" stroke="#000" stroke-width="1"/>
<path d="M28.5,345.0 h4 v3 h3 v-1 h3 v-1 h-3 v-3 h4 v-1 h-5 v-2 h6 v5 h-1 v6 h-1 v2 h-11 Z" fill="#ffd800" stroke="#000" stroke-width="1.4" stroke-linejoin="round"/>
<path d="M34,341.0 h5 M34,347.0 h4" stroke="#fff8a0" stroke-width="0.8"/>
<path d="M27,342.0 h5" stroke="#000" stroke-width="1.8"/>
<path d="M28.5,363.0 h4 v3 h3 v-1 h3 v-1 h-3 v-3 h4 v-1 h-5 v-2 h6 v5 h-1 v6 h-1 v2 h-11 Z" fill="#6e6e6e" stroke="#000" stroke-width="1.4" stroke-linejoin="round"/>
<path d="M34,359.0 h5 M34,365.0 h4" stroke="#fff8a0" stroke-width="0.8"/>
<rect x="27.5" y="358.5" width="5.5" height="4" fill="#10d8e8" stroke="#000" stroke-width="1"/><path d="M28.8,358.5 v-1 a1.5,1.5 0 0 1 3,0 v1" fill="none" stroke="#000" stroke-width="1"/>
<path d="M13.5,607 L17.5,603.5 L17.5,611.5 L13.5,614.5 Z" fill="#f4f4f4" stroke="#333" stroke-width="0.9"/>
<path d="M17.5,607 L21.5,603.5 L21.5,610.5 L17.5,614 Z" fill="#f4f4f4" stroke="#333" stroke-width="0.9"/>
<path d="M17.5,603.5 L17.5,614.5" stroke="#0000ff" stroke-width="1.3"/>
<path d="M13.5,681.0 L16.5,678.0 L26,678.0 L26,687.5 L23,690.5 Z" fill="#f0e080" stroke="#555" stroke-width="1.2" stroke-linejoin="round"/>
<path d="M13.5,681.0 h9.5 v9.5 h-9.5 Z" fill="#f0e080" stroke="#555" stroke-width="1.3"/><path d="M23,681.0 L26,678.0" stroke="#555" stroke-width="1"/>
<path d="M19.5,683.0 h-3.5 v4 h3.5 M19.5,681.0 v9.5" stroke="#555" stroke-width="1.2" fill="none"/>
<g transform="translate(0.8,0.7)">
<polygon points="1032.4,531.6 1042.8,534.2 820.6,415.4 810.2,412.8" fill="#696561" stroke="#1e1e1e" stroke-width="0.8" stroke-linejoin="round"/>
<polygon points="994.0,625.0 986.4,617.1 764.2,498.3 771.8,506.2" fill="#3a3632" stroke="#1e1e1e" stroke-width="0.8" stroke-linejoin="round"/>
<polygon points="1031.4,513.1 1042.9,511.8 820.7,393.0 809.2,394.3" fill="#807c78" stroke="#1e1e1e" stroke-width="0.8" stroke-linejoin="round"/>
<polygon points="975.7,636.7 970.8,625.7 748.6,506.9 753.5,517.9" fill="#4a4642" stroke="#1e1e1e" stroke-width="0.8" stroke-linejoin="round"/>
<polygon points="1026.3,497.4 1038.2,492.2 816.0,373.4 804.1,378.6" fill="#928e8a" stroke="#1e1e1e" stroke-width="0.8" stroke-linejoin="round"/>
<polygon points="957.3,642.7 955.4,629.3 733.2,510.5 735.1,523.9" fill="#64605c" stroke="#1e1e1e" stroke-width="0.8" stroke-linejoin="round"/>
<polygon points="1017.6,485.4 1029.0,476.7 806.8,357.9 795.4,366.6" fill="#9d9995" stroke="#1e1e1e" stroke-width="0.8" stroke-linejoin="round"/>
<polygon points="939.9,642.5 941.1,627.7 718.9,508.9 717.7,523.7" fill="#7c7874" stroke="#1e1e1e" stroke-width="0.8" stroke-linejoin="round"/>
<polygon points="929.0,638.7 924.7,636.2 702.5,517.4 706.8,519.9" fill="#3a3632" stroke="#1e1e1e" stroke-width="0.8" stroke-linejoin="round"/>
<polygon points="1005.8,478.0 1016.0,466.3 793.8,347.5 783.6,359.2" fill="#a29e9a" stroke="#1e1e1e" stroke-width="0.8" stroke-linejoin="round"/>
<polygon points="1003.9,477.3 1005.8,478.0 783.6,359.2 781.7,358.5" fill="#64605c" stroke="#1e1e1e" stroke-width="0.8" stroke-linejoin="round"/>
<polygon points="924.7,636.2 928.9,620.9 706.7,502.1 702.5,517.4" fill="#8e8a86" stroke="#1e1e1e" stroke-width="0.8" stroke-linejoin="round"/>
<polygon points="928.9,620.9 927.4,619.6 705.2,500.8 706.7,502.1" fill="#3a3632" stroke="#1e1e1e" stroke-width="0.8" stroke-linejoin="round"/>
<polygon points="1000.1,461.8 1005.1,462.5 782.9,343.7 777.9,343.0" fill="#706c68" stroke="#1e1e1e" stroke-width="0.8" stroke-linejoin="round"/>
<polygon points="991.7,475.6 1000.1,461.8 777.9,343.0 769.5,356.8" fill="#a09c98" stroke="#1e1e1e" stroke-width="0.8" stroke-linejoin="round"/>
<polygon points="916.0,628.3 912.8,624.2 690.6,505.4 693.8,509.5" fill="#3a3632" stroke="#1e1e1e" stroke-width="0.8" stroke-linejoin="round"/>
<polygon points="989.6,475.7 991.7,475.6 769.5,356.8 767.4,356.9" fill="#7c7874" stroke="#1e1e1e" stroke-width="0.8" stroke-linejoin="round"/>
<polygon points="912.8,624.2 919.7,609.5 697.5,490.7 690.6,505.4" fill="#9c9894" stroke="#1e1e1e" stroke-width="0.8" stroke-linejoin="round"/>
<polygon points="919.7,609.5 918.7,607.6 696.5,488.8 697.5,490.7" fill="#44403c" stroke="#1e1e1e" stroke-width="0.8" stroke-linejoin="round"/>
<polygon points="982.2,463.5 987.7,462.3 765.5,343.5 760.0,344.7" fill="#86827e" stroke="#1e1e1e" stroke-width="0.8" stroke-linejoin="round"/>
<polygon points="974.2,479.3 976.3,478.5 754.1,359.7 752.0,360.5" fill="#8f8b87" stroke="#1e1e1e" stroke-width="0.8" stroke-linejoin="round"/>
<polygon points="976.3,478.5 982.2,463.5 760.0,344.7 754.1,359.7" fill="#97938f" stroke="#1e1e1e" stroke-width="0.8" stroke-linejoin="round"/>
<polygon points="906.8,612.8 904.9,607.3 682.7,488.5 684.6,494.0" fill="#524e4a" stroke="#1e1e1e" stroke-width="0.8" stroke-linejoin="round"/>
<polygon points="914.1,594.3 913.6,591.9 691.4,473.1 691.9,475.5" fill="#5f5b57" stroke="#1e1e1e" stroke-width="0.8" stroke-linejoin="round"/>
<polygon points="904.9,607.3 914.1,594.3 691.9,475.5 682.7,488.5" fill="#a29e9a" stroke="#1e1e1e" stroke-width="0.8" stroke-linejoin="round"/>
<polygon points="958.6,487.9 960.7,486.5 738.5,367.7 736.4,369.1" fill="#9c9894" stroke="#1e1e1e" stroke-width="0.8" stroke-linejoin="round"/>
<polygon points="960.7,486.5 963.7,471.3 741.5,352.5 738.5,367.7" fill="#87837f" stroke="#1e1e1e" stroke-width="0.8" stroke-linejoin="round"/>
<polygon points="912.5,576.1 912.6,573.4 690.4,454.6 690.3,457.3" fill="#77736f" stroke="#1e1e1e" stroke-width="0.8" stroke-linejoin="round"/>
<polygon points="963.7,471.3 969.3,468.3 747.1,349.5 741.5,352.5" fill="#96928e" stroke="#1e1e1e" stroke-width="0.8" stroke-linejoin="round"/>
<polygon points="901.7,586.7 912.5,576.1 690.3,457.3 679.5,467.9" fill="#a19d99" stroke="#1e1e1e" stroke-width="0.8" stroke-linejoin="round"/>
<polygon points="902.1,593.2 901.7,586.7 679.5,467.9 679.9,474.4" fill="#6b6763" stroke="#1e1e1e" stroke-width="0.8" stroke-linejoin="round"/>
<polygon points="943.9,501.0 945.9,498.9 723.7,380.1 721.7,382.2" fill="#a29e9a" stroke="#1e1e1e" stroke-width="0.8" stroke-linejoin="round"/>
<polygon points="915.0,556.4 915.6,553.6 693.4,434.8 692.8,437.6" fill="#8b8783" stroke="#1e1e1e" stroke-width="0.8" stroke-linejoin="round"/>
<polygon points="945.9,498.9 945.8,484.6 723.6,365.8 723.7,380.1" fill="#726e6a" stroke="#1e1e1e" stroke-width="0.8" stroke-linejoin="round"/>
<polygon points="931.2,517.5 932.9,515.0 710.7,396.2 709.0,398.7" fill="#a19d99" stroke="#1e1e1e" stroke-width="0.8" stroke-linejoin="round"/>
<polygon points="903.2,563.7 915.0,556.4 692.8,437.6 681.0,444.9" fill="#999591" stroke="#1e1e1e" stroke-width="0.8" stroke-linejoin="round"/>
<polygon points="921.4,536.4 922.6,533.6 700.4,414.8 699.2,417.6" fill="#999591" stroke="#1e1e1e" stroke-width="0.8" stroke-linejoin="round"/>
<polygon points="945.8,484.6 951.0,480.0 728.8,361.2 723.6,365.8" fill="#a09c98" stroke="#1e1e1e" stroke-width="0.8" stroke-linejoin="round"/>
<polygon points="934.3,496.7 943.9,501.0 721.7,382.2 712.1,377.9" fill="#5f5b57" stroke="#1e1e1e" stroke-width="0.8" stroke-linejoin="round"/>
<polygon points="902.2,570.8 903.2,563.7 681.0,444.9 680.0,452.0" fill="#827e7a" stroke="#1e1e1e" stroke-width="0.8" stroke-linejoin="round"/>
<polygon points="915.6,553.6 907.2,547.1 685.0,428.3 693.4,434.8" fill="#3a3632" stroke="#1e1e1e" stroke-width="0.8" stroke-linejoin="round"/>
<polygon points="932.9,515.0 929.7,502.5 707.5,383.7 710.7,396.2" fill="#5a5652" stroke="#1e1e1e" stroke-width="0.8" stroke-linejoin="round"/>
<polygon points="909.5,540.0 921.4,536.4 699.2,417.6 687.3,421.2" fill="#8b8783" stroke="#1e1e1e" stroke-width="0.8" stroke-linejoin="round"/>
<polygon points="920.1,517.1 931.2,517.5 709.0,398.7 697.9,398.3" fill="#77736f" stroke="#1e1e1e" stroke-width="0.8" stroke-linejoin="round"/>
<polygon points="922.6,533.6 916.5,523.8 694.3,405.0 700.4,414.8" fill="#3f3b37" stroke="#1e1e1e" stroke-width="0.8" stroke-linejoin="round"/>
<polygon points="929.7,502.5 934.3,496.7 712.1,377.9 707.5,383.7" fill="#a29e9a" stroke="#1e1e1e" stroke-width="0.8" stroke-linejoin="round"/>
<polygon points="907.2,547.1 909.5,540.0 687.3,421.2 685.0,428.3" fill="#938f8b" stroke="#1e1e1e" stroke-width="0.8" stroke-linejoin="round"/>
<polygon points="916.5,523.8 920.1,517.1 697.9,398.3 694.3,405.0" fill="#9e9a96" stroke="#1e1e1e" stroke-width="0.8" stroke-linejoin="round"/>
<polygon points="853,438 981,393 977,551 845,596" fill="#424242" stroke="#000" stroke-width="1.4"/>
<polygon points="1032.4,531.6 1042.8,534.2 1041.8,541.3 1030.0,548.6 1029.4,551.4 1037.8,557.9 1035.5,565.0 1023.6,568.6 1022.4,571.4 1028.5,581.2 1024.9,587.9 1013.8,587.5 1012.1,590.0 1015.3,602.5 1010.7,608.3 1001.1,604.0 999.1,606.1 999.2,620.4 994.0,625.0 986.4,617.1 984.3,618.5 981.3,633.7 975.7,636.7 970.8,625.7 968.7,626.5 962.8,641.5 957.3,642.7 955.4,629.3 953.3,629.4 944.9,643.2 939.9,642.5 941.1,627.7 939.2,627.0 929.0,638.7 924.7,636.2 928.9,620.9 927.4,619.6 916.0,628.3 912.8,624.2 919.7,609.5 918.7,607.6 906.8,612.8 904.9,607.3 914.1,594.3 913.6,591.9 902.1,593.2 901.7,586.7 912.5,576.1 912.6,573.4 902.2,570.8 903.2,563.7 915.0,556.4 915.6,553.6 907.2,547.1 909.5,540.0 921.4,536.4 922.6,533.6 916.5,523.8 920.1,517.1 931.2,517.5 932.9,515.0 929.7,502.5 934.3,496.7 943.9,501.0 945.9,498.9 945.8,484.6 951.0,480.0 958.6,487.9 960.7,486.5 963.7,471.3 969.3,468.3 974.2,479.3 976.3,478.5 982.2,463.5 987.7,462.3 989.6,475.7 991.7,475.6 1000.1,461.8 1005.1,462.5 1003.9,477.3 1005.8,478.0 1016.0,466.3 1020.3,468.8 1016.1,484.1 1017.6,485.4 1029.0,476.7 1032.2,480.8 1025.3,495.5 1026.3,497.4 1038.2,492.2 1040.1,497.7 1030.9,510.7 1031.4,513.1 1042.9,511.8 1043.3,518.3 1032.5,528.9" fill="#9a9692" stroke="#1a1a1a" stroke-width="1" stroke-linejoin="round"/>
<polygon points="1006.5,540.5 1006.2,544.2 1005.7,548.0 1004.8,551.8 1003.8,555.6 1002.5,559.4 1000.9,563.1 999.2,566.8 997.2,570.3 995.1,573.8 992.8,577.0 990.3,580.1 987.7,582.9 985.0,585.5 982.1,587.9 979.3,590.0 976.3,591.8 973.3,593.3 970.4,594.5 967.4,595.4 964.5,596.0 961.6,596.2 958.9,596.1 956.2,595.6 953.6,594.9 951.2,593.8 949.0,592.4 946.9,590.7 945.0,588.7 943.4,586.4 941.9,583.9 940.7,581.1 939.8,578.1 939.1,574.9 938.6,571.6 938.4,568.1 938.5,564.5 938.8,560.8 939.3,557.0 940.2,553.2 941.2,549.4 942.5,545.6 944.1,541.9 945.8,538.2 947.8,534.7 949.9,531.2 952.2,528.0 954.7,524.9 957.3,522.1 960.0,519.5 962.9,517.1 965.7,515.0 968.7,513.2 971.7,511.7 974.6,510.5 977.6,509.6 980.5,509.0 983.4,508.8 986.1,508.9 988.8,509.4 991.4,510.1 993.8,511.2 996.0,512.6 998.1,514.3 1000.0,516.3 1001.6,518.6 1003.1,521.1 1004.3,523.9 1005.2,526.9 1005.9,530.1 1006.4,533.4 1006.6,536.9" fill="none" stroke="#161616" stroke-width="1.2"/>
<polygon points="1004.8,541.2 1004.5,544.7 1003.9,548.2 1003.1,551.9 1002.1,555.5 1000.9,559.0 999.4,562.6 997.8,566.0 995.9,569.4 993.9,572.6 991.7,575.7 989.3,578.6 986.9,581.3 984.3,583.8 981.6,586.0 978.9,588.0 976.1,589.7 973.3,591.2 970.5,592.3 967.7,593.2 964.9,593.7 962.2,593.9 959.6,593.8 957.0,593.4 954.6,592.7 952.3,591.6 950.2,590.3 948.3,588.7 946.5,586.8 944.9,584.6 943.6,582.2 942.4,579.6 941.5,576.8 940.8,573.8 940.4,570.6 940.2,567.3 940.2,563.8 940.5,560.3 941.1,556.8 941.9,553.1 942.9,549.5 944.1,546.0 945.6,542.4 947.2,539.0 949.1,535.6 951.1,532.4 953.3,529.3 955.7,526.4 958.1,523.7 960.7,521.2 963.4,519.0 966.1,517.0 968.9,515.3 971.7,513.8 974.5,512.7 977.3,511.8 980.1,511.3 982.8,511.1 985.4,511.2 988.0,511.6 990.4,512.3 992.7,513.4 994.8,514.7 996.7,516.3 998.5,518.2 1000.1,520.4 1001.4,522.8 1002.6,525.4 1003.5,528.2 1004.2,531.2 1004.6,534.4 1004.8,537.7" fill="none" stroke="#161616" stroke-width="1.0"/>
<polygon points="981.8,556.6 981.2,557.8 980.6,558.8 979.9,559.8 979.1,560.8 978.3,561.7 977.4,562.5 976.5,563.2 975.6,563.9 974.6,564.5 973.6,564.9 972.6,565.3 971.6,565.5 970.5,565.7 969.5,565.8 968.5,565.7 967.6,565.6 966.6,565.3 965.8,565.0 964.9,564.5 964.1,564.0 963.4,563.3 962.7,562.6 962.1,561.8 961.6,560.9 961.1,559.9 960.8,558.9 960.5,557.9 960.3,556.8 960.2,555.6 960.1,554.5 960.2,553.3 960.4,552.1 960.6,550.9 960.9,549.7 961.3,548.5 961.8,547.4 962.4,546.2 963.0,545.2 963.7,544.2 964.5,543.2 965.3,542.3 966.2,541.5 967.1,540.8 968.0,540.1 969.0,539.5 970.0,539.1 971.0,538.7 972.0,538.5 973.1,538.3 974.1,538.2 975.1,538.3 976.0,538.4 977.0,538.7 977.8,539.0 978.7,539.5 979.5,540.0 980.2,540.7 980.9,541.4 981.5,542.2 982.0,543.1 982.5,544.1 982.8,545.1 983.1,546.1 983.3,547.2 983.4,548.4 983.5,549.5 983.4,550.7 983.2,551.9 983.0,553.1 982.7,554.3 982.3,555.5" fill="#a9a9a9" stroke="#161616" stroke-width="1"/>
<polyline points="980.5,544.8 980.7,545.9 980.9,547.1 980.9,548.3 980.8,549.6 980.6,550.8 980.3,552.1 979.9,553.3 979.4,554.5 978.8,555.7 978.1,556.8 977.4,557.8 976.5,558.8 975.6,559.6 974.7,560.4 973.7,561.1 972.6,561.6" fill="none" stroke="#f0f0f0" stroke-width="0.8"/>
<polyline points="978.7,543.5 978.9,544.6 979.1,545.7 979.1,546.9 979.0,548.1 978.8,549.3 978.5,550.5 978.1,551.7 977.7,552.8 977.1,553.9 976.4,555.0 975.7,556.0 974.9,556.9 974.0,557.7 973.1,558.4 972.2,559.0 971.2,559.6" fill="none" stroke="#8a8a8a" stroke-width="0.8"/>
<polyline points="976.9,542.3 977.1,543.3 977.2,544.4 977.3,545.5 977.2,546.6 977.0,547.8 976.7,548.9 976.4,550.0 975.9,551.1 975.4,552.1 974.7,553.1 974.1,554.1 973.3,554.9 972.5,555.7 971.6,556.4 970.7,557.0 969.8,557.5" fill="none" stroke="#f0f0f0" stroke-width="0.8"/>
<polyline points="975.1,541.1 975.3,542.0 975.4,543.0 975.4,544.1 975.4,545.1 975.2,546.2 974.9,547.3 974.6,548.3 974.2,549.4 973.6,550.4 973.1,551.3 972.4,552.2 971.7,553.0 970.9,553.8 970.1,554.4 969.3,555.0 968.4,555.5" fill="none" stroke="#8a8a8a" stroke-width="0.8"/>
<polyline points="973.3,539.8 973.5,540.7 973.6,541.7 973.6,542.7 973.5,543.7 973.4,544.7 973.1,545.7 972.8,546.7 972.4,547.7 971.9,548.6 971.4,549.5 970.7,550.3 970.1,551.1 969.4,551.8 968.6,552.4 967.8,553.0 967.0,553.4" fill="none" stroke="#f0f0f0" stroke-width="0.8"/>
<path d="M972,551 L960.5,555 C960,547 963,540 968,538 L972.5,537.5 Z" fill="#3a3a3a"/>
<polygon points="961.8,501 988.9,492 987.2,525.2 959.8,535.3" fill="#3e3c3a" stroke="#141414" stroke-width="1"/>
<polygon points="974.6,496.3 988.9,492 988.3,505 974.4,509" fill="#5e5a57"/>
<polygon points="974.4,509 988.3,505 987.4,520 974.2,525" fill="#6a6662"/>
<polygon points="974.2,525 987.4,520 987.2,525.2 974.2,530" fill="#b8b4b0"/>
<path d="M961.8,501 L988.9,492 L987.2,525.2 L959.8,535.3 Z" fill="none" stroke="#141414" stroke-width="1"/>
<path d="M977.5,452 L972.5,551 M904,575.5 L972.5,551" stroke="#161616" stroke-width="1" fill="none"/>
<polygon points="449,222 853,438 845,596 439,381" fill="#262626" stroke="#000" stroke-width="1.4" stroke-linejoin="round"/>
<polygon points="577,177 981,393 853,438 449,222" fill="#474747" stroke="#000" stroke-width="1.4" stroke-linejoin="round"/>
</g>
<g transform="translate(0.5,1.2)"><path d="M845,484 L847.5,460" stroke="#1010ff" stroke-width="1.3"/><path d="M845.2,462 L847.8,454 L850,462 Z" fill="#1010ff"/></g>
<g transform="translate(0.5,1.2)"><path d="M845,484 L828,474" stroke="#10c010" stroke-width="1.2"/><path d="M823.5,472.5 L830.5,472 L828.5,476.5 Z" fill="#10d010"/></g>
<g transform="translate(0.5,1.2)"><path d="M845,484 L864,477" stroke="#ff1010" stroke-width="1.2"/><path d="M869.5,476.2 L862.5,474.5 L864,479 Z" fill="#ff1010"/></g>
<path d="M442.6,637 L444.3,614" stroke="#1010ff" stroke-width="2"/><path d="M441.5,615 L444.5,607 L447.5,615 Z" fill="#1010ff"/>
<path d="M442.6,637 L424,627" stroke="#10b010" stroke-width="1.5"/><path d="M420.5,625 L427,624.5 L425,629.5 Z" fill="#10c010"/>
<path d="M442.6,637 L462,630.5" stroke="#ff1010" stroke-width="1.5"/><path d="M467,629 L460,628 L461.5,633 Z" fill="#dd1010"/>
<path d="M442.5,598 L448,598 L442.5,607 L448,607" fill="none" stroke="#1818ff" stroke-width="1.2"/>
<path d="M414,619.5 L417,624 L420,619.5 M417,624 L417,628" fill="none" stroke="#18e018" stroke-width="1.1"/>
<path d="M468,622.5 L474,632.5 M474,622.5 L468,632.5" fill="none" stroke="#ff1818" stroke-width="1.1"/>
<rect x="1031.5" y="149.5" width="30" height="19" rx="2" fill="#f0f0f0" stroke="#c8c8c8"/>
<rect x="1062.5" y="149.5" width="30" height="19" rx="2" fill="#f0f0f0" stroke="#c8c8c8"/>
<rect x="1094.5" y="149.5" width="30" height="19" rx="2" fill="#f0f0f0" stroke="#c8c8c8"/>
<rect x="1041" y="162" width="11" height="2" fill="#555"/>
<rect x="1072.5" y="155.5" width="11" height="8" fill="#fff" stroke="#555"/><path d="M1074.5,155 L1074.5,153.5 L1085.5,153.5 L1085.5,161.5 L1084,161.5" fill="none" stroke="#555"/>
<rect x="1100" y="151" width="20" height="15" fill="#c0504f"/><path d="M1106,154.5 L1114,162.5 M1114,154.5 L1106,162.5" stroke="#fff" stroke-width="1.5"/>
</svg>
</div>
<div id="bd"></div>
</body></html>
